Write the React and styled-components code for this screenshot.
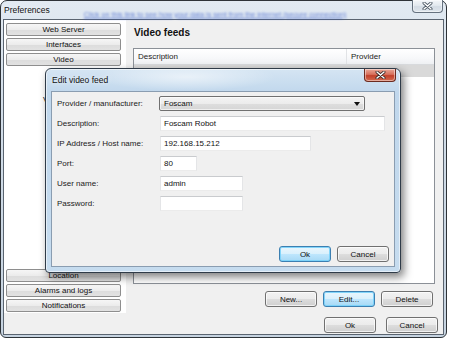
import React from 'react'
import styled, { createGlobalStyle } from 'styled-components'

const GlobalStyle = createGlobalStyle`
  html, body {
    margin: 0;
    padding: 0;
    background: #ffffff;
  }
  body {
    font-family: "Liberation Sans", Arial, sans-serif;
    font-size: 8px;
    color: #1a1a1a;
  }
`

const Stage = styled.div`
  position: relative;
  width: 449px;
  height: 339px;
  overflow: hidden;
`

const Window = styled.div`
  position: relative;
  width: 447px;
  height: 338px;
  box-sizing: border-box;
  border: 1px solid #2e3338;
  border-radius: 7px 7px 6px 6px;
  background: linear-gradient(180deg, #e2eaf2 0%, #d3dee9 30%, #c6d3e0 100%);
  padding: 0 2px 2px;
  display: flex;
  flex-direction: column;
`

const TitleBar = styled.div`
  height: 18px;
  display: flex;
  align-items: center;
  padding-left: 1px;
  white-space: nowrap;
`

const TitleText = styled.span`
  font-size: 8.5px;
  color: #111;
  text-shadow: 0 0 4px rgba(255, 255, 255, 0.95);
`

const GlassLink = styled.span`
  margin-left: 34px;
  margin-top: 8px;
  font-size: 7.2px;
  color: #2d52c8;
  text-decoration: underline;
  filter: blur(0.9px);
  opacity: 0.7;
`

const CaptionButton = styled.div`
  position: absolute;
  top: ${p => (p.$danger ? '0' : '-1px')};
  right: ${p => (p.$danger ? '4px' : '3px')};
  width: ${p => (p.$danger ? '32px' : '31px')};
  height: 13px;
  box-sizing: border-box;
  border: 1px solid ${p => (p.$danger ? '#6b2a1f' : '#66727f')};
  border-top: none;
  border-radius: 0 0 4px 4px;
  background: ${p =>
    p.$danger
      ? 'linear-gradient(180deg, #e9a898 0%, #d7705c 45%, #c2412b 55%, #d36a4f 100%)'
      : 'linear-gradient(180deg, #f3f6f9 0%, #e3e9ef 45%, #d3dbe4 55%, #dfe6ed 100%)'};
  box-shadow: inset 0 0 0 1px rgba(255, 255, 255, 0.45);
  display: flex;
  align-items: center;
  justify-content: center;
`

const Client = styled.div`
  flex: 1;
  min-height: 0;
  border: 1px solid #5a6470;
  background: #f0f0f0;
  display: flex;
  flex-direction: column;
`

const MainRow = styled.div`
  height: 293px;
  display: flex;
`

const Sidebar = styled.div`
  width: 122px;
  box-sizing: border-box;
  background: #ffffff;
  padding: 3px 0 1px 2px;
  display: flex;
  flex-direction: column;
`

const NavGroup = styled.div`
  display: flex;
  flex-direction: column;
  gap: 2px;
  margin-top: ${p => (p.$bottom ? 'auto' : '0')};
`

const NavButton = styled.div`
  width: 115px;
  height: 13px;
  box-sizing: border-box;
  border: 1px solid #8e8e8e;
  border-radius: 2px;
  background: linear-gradient(180deg, #f6f6f6 0%, #ececec 50%, #dcdcdc 51%, #e2e2e2 100%);
  display: flex;
  align-items: center;
  justify-content: center;
  font-size: 8px;
  color: #111;
`

const SideLink = styled.div`
  margin-top: 29px;
  padding-left: 37px;
  line-height: 10px;
  font-size: 8px;
  color: #111;
`

const RightPanel = styled.div`
  flex: 1;
  min-width: 0;
  display: flex;
  flex-direction: column;
  padding: 7px 8px 6px 7px;
`

const PanelTitle = styled.div`
  font-size: 10px;
  font-weight: bold;
  line-height: 12px;
  color: #111;
  margin-left: 1px;
`

const List = styled.div`
  margin-top: 9px;
  flex: 1;
  border: 1px solid #8b9097;
  background: #ffffff;
`

const ListRow = styled.div`
  display: grid;
  grid-template-columns: 213px 1fr;
  height: ${p => (p.$header ? '15px' : '12px')};
  line-height: ${p => (p.$header ? '15px' : '12px')};
  background: ${p =>
    p.$header
      ? 'linear-gradient(180deg, #ffffff 0%, #f7f8fa 60%, #eef0f3 100%)'
      : p.$selected
      ? '#d9d9d9'
      : 'transparent'};
  border-bottom: ${p => (p.$header ? '1px solid #d8dadd' : 'none')};
  font-size: 8px;
  color: #1a1a1a;
`

const Cell = styled.div`
  padding-left: 4px;
  border-right: ${p => (p.$divider ? '1px solid #e1e3e6' : 'none')};
  white-space: nowrap;
  overflow: hidden;
`

const ButtonRow = styled.div`
  display: flex;
  justify-content: flex-end;
  gap: ${p => p.$gap || 6}px;
  margin-top: ${p => p.$top || 0}px;
  padding-right: ${p => p.$right || 0}px;
`

const PushButton = styled.div`
  width: 52px;
  height: 16px;
  box-sizing: border-box;
  border: 1px solid ${p => (p.$focused ? '#3c7fb1' : '#707070')};
  border-radius: 3px;
  background: ${p =>
    p.$focused
      ? 'linear-gradient(180deg, #eaf6fd 0%, #d9f0fc 50%, #bee6fd 51%, #a7d9f5 100%)'
      : 'linear-gradient(180deg, #f2f2f2 0%, #ebebeb 50%, #dddddd 51%, #cfcfcf 100%)'};
  box-shadow: inset 0 0 0 1px ${p => (p.$focused ? 'rgba(120, 210, 250, 0.9)' : 'rgba(255, 255, 255, 0.7)')};
  display: flex;
  align-items: center;
  justify-content: center;
  font-size: 8px;
  color: #111;
`

const Footer = styled.div`
  flex: 1;
  padding-top: 4px;
`

const Dialog = styled.div`
  position: absolute;
  left: 45px;
  top: 68px;
  width: 356px;
  height: 205px;
  box-sizing: border-box;
  border: 1px solid #2f3b48;
  border-radius: 6px 6px 4px 4px;
  background:
    radial-gradient(ellipse 90px 14px at 140px 8px, rgba(255, 255, 255, 0.55), rgba(255, 255, 255, 0) 100%),
    linear-gradient(180deg, #d5e5f3 0%, #c0d7ec 12%, #c6dcef 100%);
  box-shadow: 3px 4px 8px rgba(0, 0, 0, 0.5), inset 0 0 0 1px rgba(255, 255, 255, 0.55);
  padding: 0 5px 5px;
  display: flex;
  flex-direction: column;
`

const DialogTitle = styled.div`
  height: 22px;
  display: flex;
  align-items: center;
  padding-left: 1px;
  font-size: 8.5px;
  color: #111;
  text-shadow: 0 0 4px rgba(255, 255, 255, 0.9);
`

const DialogClient = styled.div`
  flex: 1;
  border: 1px solid #8a9db1;
  background: #f0f0f0;
  padding: 4px 5px 4px 5px;
  display: flex;
  flex-direction: column;
`

const Form = styled.div`
  display: grid;
  grid-template-columns: 103px auto;
  grid-auto-rows: 15px;
  row-gap: 5px;
  align-items: center;
`

const Label = styled.div`
  font-size: 8px;
  color: #1a1a1a;
  white-space: nowrap;
`

const TextBox = styled.div`
  justify-self: start;
  width: ${p => p.$w}px;
  height: 15px;
  box-sizing: border-box;
  border: 1px solid;
  border-color: #c9cbce #e4e5e7 #ebebeb #e4e5e7;
  background: #ffffff;
  padding: 0 3px;
  font-size: 8px;
  line-height: 13px;
  color: #111;
  white-space: nowrap;
`

const Select = styled.div`
  justify-self: start;
  margin-left: -1px;
  width: 206px;
  height: 15px;
  box-sizing: border-box;
  border: 1px solid #707070;
  border-radius: 2px;
  background: linear-gradient(180deg, #f4f4f4 0%, #ececec 50%, #dedede 51%, #d6d6d6 100%);
  box-shadow: inset 0 0 0 1px rgba(255, 255, 255, 0.6);
  display: flex;
  align-items: center;
  justify-content: space-between;
  padding: 0 4px 0 4px;
  font-size: 8px;
  color: #111;
`

const DialogButtons = styled(ButtonRow)`
  margin-top: auto;
`

function CloseGlyph({ light }) {
  return (
    <svg width="11" height="8" viewBox="0 0 11 8">
      <path d="M2 1 L9 7 M9 1 L2 7" stroke={light ? '#3a2a28' : '#4a5663'} strokeWidth="3" strokeLinecap="round" />
      <path d="M2 1 L9 7 M9 1 L2 7" stroke="#ffffff" strokeWidth="1.4" strokeLinecap="round" />
    </svg>
  )
}

function DropArrow() {
  return (
    <svg width="6" height="4" viewBox="0 0 6 4">
      <path d="M0 0 H6 L3 4 Z" fill="#111" />
    </svg>
  )
}

export default function App() {
  return (
    <>
      <GlobalStyle />
      <Stage>
        <Window>
          <TitleBar>
            <TitleText>Preferences</TitleText>
            <GlassLink>Click on this link to see how your data is sent from the internet (secure connection)</GlassLink>
          </TitleBar>
          <CaptionButton>
            <CloseGlyph />
          </CaptionButton>
          <Client>
            <MainRow>
              <Sidebar>
                <NavGroup>
                  <NavButton>Web Server</NavButton>
                  <NavButton>Interfaces</NavButton>
                  <NavButton>Video</NavButton>
                </NavGroup>
                {/* only the first letter of this item peeks out from under the dialog */}
                <SideLink>V</SideLink>
                <NavGroup $bottom>
                  <NavButton>Location</NavButton>
                  <NavButton>Alarms and logs</NavButton>
                  <NavButton>Notifications</NavButton>
                </NavGroup>
              </Sidebar>
              <RightPanel>
                <PanelTitle>Video feeds</PanelTitle>
                <List>
                  <ListRow $header>
                    <Cell $divider>Description</Cell>
                    <Cell>Provider</Cell>
                  </ListRow>
                  <ListRow $selected>
                    <Cell>Foscam Robot</Cell>
                    <Cell>Foscam</Cell>
                  </ListRow>
                  <ListRow>
                    <Cell>Camera 1</Cell>
                    <Cell>Generic</Cell>
                  </ListRow>
                </List>
                <ButtonRow $top={7} $right={2}>
                  <PushButton>New...</PushButton>
                  <PushButton $focused>Edit...</PushButton>
                  <PushButton>Delete</PushButton>
                </ButtonRow>
              </RightPanel>
            </MainRow>
            <Footer>
              <ButtonRow $gap={10} $right={5}>
                <PushButton>Ok</PushButton>
                <PushButton>Cancel</PushButton>
              </ButtonRow>
            </Footer>
          </Client>
        </Window>

        <Dialog>
          <DialogTitle>Edit video feed</DialogTitle>
          <CaptionButton $danger>
            <CloseGlyph light />
          </CaptionButton>
          <DialogClient>
            <Form>
              <Label>Provider / manufacturer:</Label>
              <Select>
                <span>Foscam</span>
                <DropArrow />
              </Select>
              <Label>Description:</Label>
              <TextBox $w={225}>Foscam Robot</TextBox>
              <Label>IP Address / Host name:</Label>
              <TextBox $w={151}>192.168.15.212</TextBox>
              <Label>Port:</Label>
              <TextBox $w={37}>80</TextBox>
              <Label>User name:</Label>
              <TextBox $w={83}>admin</TextBox>
              <Label>Password:</Label>
              <TextBox $w={83}></TextBox>
            </Form>
            <DialogButtons>
              <PushButton $focused>Ok</PushButton>
              <PushButton>Cancel</PushButton>
            </DialogButtons>
          </DialogClient>
        </Dialog>
      </Stage>
    </>
  )
}
